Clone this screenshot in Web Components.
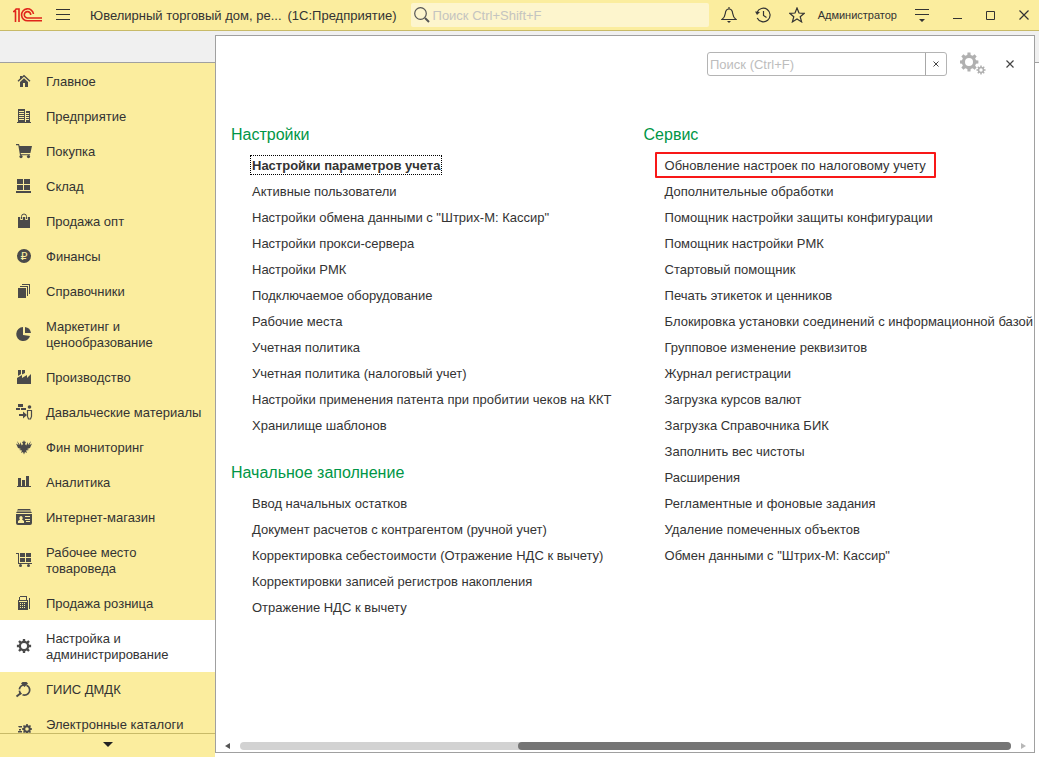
<!DOCTYPE html>
<html lang="ru">
<head>
<meta charset="utf-8">
<title>Ювелирный торговый дом (1С:Предприятие)</title>
<style>
  html, body { margin: 0; height: 100%; }
  body {
    font: 13px/16px "Liberation Sans", Arial, sans-serif;
    color: #333;
    --yellow: #fbed9e;
    --yellow-line: #c8ba68;
    --frame: #a0a0a0;
    --icon: #4a4a4a;
  }
</style>
</head>
<body>
<app-window>
  <title-bar slot="title" name="Ювелирный торговый дом, ре..." product="(1С:Предприятие)" user="Администратор"></title-bar>
  <section-nav slot="nav">
    <nav-item icon="home">Главное</nav-item>
    <nav-item icon="company">Предприятие</nav-item>
    <nav-item icon="cart">Покупка</nav-item>
    <nav-item icon="stock">Склад</nav-item>
    <nav-item icon="bag">Продажа опт</nav-item>
    <nav-item icon="money">Финансы</nav-item>
    <nav-item icon="books">Справочники</nav-item>
    <nav-item icon="pie">Маркетинг и ценообразование</nav-item>
    <nav-item icon="factory">Производство</nav-item>
    <nav-item icon="materials">Давальческие материалы</nav-item>
    <nav-item icon="eagle">Фин мониторинг</nav-item>
    <nav-item icon="chart">Аналитика</nav-item>
    <nav-item icon="card">Интернет-магазин</nav-item>
    <nav-item icon="trolley">Рабочее место товароведа</nav-item>
    <nav-item icon="till">Продажа розница</nav-item>
    <nav-item icon="gear" selected>Настройка и администрирование</nav-item>
    <nav-item icon="ring">ГИИС ДМДК</nav-item>
    <nav-item icon="catalog" tall>Электронные каталоги</nav-item>
  </section-nav>
  <function-panel>
    <div slot="left">
      <link-group heading="Настройки">
        <menu-link focused>Настройки параметров учета</menu-link>
        <menu-link>Активные пользователи</menu-link>
        <menu-link>Настройки обмена данными с "Штрих-М: Кассир"</menu-link>
        <menu-link>Настройки прокси-сервера</menu-link>
        <menu-link>Настройки РМК</menu-link>
        <menu-link>Подключаемое оборудование</menu-link>
        <menu-link>Рабочие места</menu-link>
        <menu-link>Учетная политика</menu-link>
        <menu-link>Учетная политика (налоговый учет)</menu-link>
        <menu-link>Настройки применения патента при пробитии чеков на ККТ</menu-link>
        <menu-link>Хранилище шаблонов</menu-link>
      </link-group>
      <link-group heading="Начальное заполнение">
        <menu-link>Ввод начальных остатков</menu-link>
        <menu-link>Документ расчетов с контрагентом (ручной учет)</menu-link>
        <menu-link>Корректировка себестоимости (Отражение НДС к вычету)</menu-link>
        <menu-link>Корректировки записей регистров накопления</menu-link>
        <menu-link>Отражение НДС к вычету</menu-link>
      </link-group>
    </div>
    <div slot="right">
      <link-group heading="Сервис">
        <menu-link marked>Обновление настроек по налоговому учету</menu-link>
        <menu-link>Дополнительные обработки</menu-link>
        <menu-link>Помощник настройки защиты конфигурации</menu-link>
        <menu-link>Помощник настройки РМК</menu-link>
        <menu-link>Стартовый помощник</menu-link>
        <menu-link>Печать этикеток и ценников</menu-link>
        <menu-link>Блокировка установки соединений с информационной базой</menu-link>
        <menu-link>Групповое изменение реквизитов</menu-link>
        <menu-link>Журнал регистрации</menu-link>
        <menu-link>Загрузка курсов валют</menu-link>
        <menu-link>Загрузка Справочника БИК</menu-link>
        <menu-link>Заполнить вес чистоты</menu-link>
        <menu-link>Расширения</menu-link>
        <menu-link>Регламентные и фоновые задания</menu-link>
        <menu-link>Удаление помеченных объектов</menu-link>
        <menu-link>Обмен данными с "Штрих-М: Кассир"</menu-link>
      </link-group>
    </div>
  </function-panel>
</app-window>

<script>
const gearPath = (cx, cy, outer, inner, hole, teeth) => {
  let d = '';
  const step = Math.PI * 2 / teeth;
  for (let i = 0; i < teeth; i++) {
    const a = i * step - Math.PI / 2;
    [[-0.30, inner], [-0.20, outer], [0.20, outer], [0.30, inner]].forEach(([k, r], j) => {
      d += (i || j ? 'L' : 'M') + (cx + r * Math.cos(a + k * step)).toFixed(2) + ' ' + (cy + r * Math.sin(a + k * step)).toFixed(2);
    });
  }
  return d + `ZM${cx - hole} ${cy}a${hole} ${hole} 0 1 0 ${hole * 2} 0a${hole} ${hole} 0 1 0 ${-hole * 2} 0Z`;
};

const ICONS = {
  home: '<path d="M8 5.2 12 9v5H9v-4H7v4H4V9Z"/><path d="M2 8.2 8 2.8l6 5.4" fill="none" stroke="currentColor" stroke-width="1.4"/><path d="M4 3h2v2L4 6.600Z"/>',
  company: '<path fill-rule="evenodd" d="M2 1h7v13H2ZM3 3v1h5V3ZM3 5v1h5V5ZM3 7v1h5V7ZM3 9v1h5V9ZM3 11v1h5v-1Z" shape-rendering="crispEdges"/><path fill-rule="evenodd" d="M10 3h4v11h-4ZM10 5v1h3V5ZM10 7v1h3V7ZM10 9v1h3V9ZM10 11v1h3v-1Z" shape-rendering="crispEdges"/><path d="M1 14h14v1H1Z"/>',
  cart: '<path d="M0 1h3l.6 2H16l-1.600 7H4.600L5 11.200h9v1H4L2.300 2.200H0Z"/><circle cx="5" cy="13.600" r="1.600"/><circle cx="12.500" cy="13.600" r="1.600"/>',
  stock: '<path shape-rendering="crispEdges" d="M1 1h6v5H1ZM8 1h6v5H8ZM1 7h6v5H1ZM8 7h6v5H8ZM0 13h15v2H0Z"/>',
  bag: '<path d="M2 4h12v11H2Z"/><path d="M5.500 7V3.500a2.500 2.500 0 0 1 5 0V7" fill="none" stroke="#fbed9e" stroke-width="2.600"/><path d="M5.500 6V3.500a2.500 2.500 0 0 1 5 0V6" fill="none" stroke="currentColor"/>',
  money: '<circle cx="8" cy="8" r="7"/><text x="8" y="12" text-anchor="middle" font-family="DejaVu Sans, sans-serif" font-size="11" fill="#fbed9e">₽</text>',
  books: '<path shape-rendering="crispEdges" d="M2 5h8v10H2ZM4 3h8v10h-1V4H4ZM6 1h8v10h-1V2H6Z"/>',
  pie: '<path d="M7 1.100V9l7 .9A7 7 0 1 1 7 1.100Z"/><path d="M9 1a7 7 0 0 1 6 6H9Z"/>',
  factory: '<path d="M1 15V9l5-3v3l5-3v3l4-4v10Z"/><path d="M2 1h3v4L2 7ZM6 1h3v3L6 5.500Z"/>',
  materials: '<path shape-rendering="crispEdges" d="M2 0h5v3H2ZM0 4h4v2H0ZM5 4h5v2H5Z"/><path d="M3 10h4V7.500l4 3.500-4 3.500V12H3Z"/><circle cx="13.500" cy="3" r="1.800"/><path d="M11.500 6.500h4v6l-1 2.500h-2l-1-2.500Z" fill="none" stroke="currentColor" stroke-width="1.200"/>',
  eagle: '<path d="m1 2 1.500 4L0 4.500 2 9l3 1-2 1 3 .5L5 14l2-1 1 2.500L9 13l2 1-1-2.500 3-.5-2-1 3-1 2-4.500L13.500 6 15 2l-3 4-.2-3-1.600 3.500L9 5l1-2-1.500-.5L8 1l-.500 1.500L6 3l1 2-1.200 1.500L4.200 3 4 6Z"/>',
  chart: '<path shape-rendering="crispEdges" d="M2 4h3v8H2ZM6 6h3v6H6ZM10 2h3v10h-3ZM1 12h14v1H1Z"/>',
  card: '<path d="M2 0h12l1 1.500H1ZM1 2.500h14L16 4H0Z"/><path fill-rule="evenodd" d="M0 5h16v9q0 2-2 2H2q-2 0-2-2ZM5 7a2 2 0 0 0-1 3.500L2 12v2h6v-2l-2-1.500A2 2 0 0 0 5 7ZM9 7v1h5V7ZM9 10v1h5v-1ZM10 12v1h4v-1Z"/>',
  trolley: '<path shape-rendering="crispEdges" d="M0 1h3v10h13v1H2V2H0ZM4 1h5v4H4ZM10 1h5v4h-5ZM4 6h5v4H4ZM10 6h5v4h-5Z"/><circle cx="4.500" cy="13.500" r="1.500"/><circle cx="12.500" cy="13.500" r="1.500"/>',
  till: '<path shape-rendering="crispEdges" fill-rule="evenodd" d="M4 1h6l1 1v3h1v10H2V5h1V2ZM4 2v3h6V2ZM3 6v1h8V6ZM4 8v1h1V8ZM6 8v1h1V8ZM8 8v1h1V8ZM4 10v1h1v-1ZM6 10v1h1v-1ZM8 10v1h1v-1ZM4 12v1h1v-1ZM6 12v1h1v-1ZM8 12v1h1v-1ZM13 3h1v11h-1Z"/>',
  gear: `<path fill-rule="evenodd" d="${gearPath(8, 8, 7.200, 5.300, 3, 8)}"/>`,
  ring: '<circle cx="8.500" cy="9" r="5.200" fill="none" stroke="currentColor" stroke-width="1.700" stroke-dasharray="10 1.300 4 1.300 8 1.300"/><path d="M5 2.500 6.500 1h4L12 2.500 8.500 6Z"/><path d="m5 12-4.500 3.500" stroke="currentColor" stroke-width="2"/>',
  catalog: `<path fill-rule="evenodd" d="${gearPath(11, 5, 5, 3.800, 1.800, 8)}"/><path d="M2 2h4v1.500H3ZM3 5h2v1.500H3ZM2 7h4v1.500H2Z"/>`,
};

function define(name, template, setup) {
  const tpl = document.createElement('template');
  tpl.innerHTML = template;
  customElements.define(name, class extends HTMLElement {
    constructor() {
      super();
      this.attachShadow({ mode: 'open' }).append(tpl.content.cloneNode(true));
    }
    connectedCallback() { if (setup) setup(this, this.shadowRoot); }
  });
}

define('app-window', `
  <style>
    :host { display: flex; flex-direction: column; height: 100vh; overflow: hidden; }
    .work {
      flex: 1; min-height: 0; display: grid; grid-template-columns: 215px minmax(0, 1fr); grid-template-rows: minmax(0, 1fr);
      background: linear-gradient(#f0f0f0 0 31px, var(--frame) 31px 32px, #fff 32px);
    }
  </style>
  <slot name="title"></slot>
  <div class="work"><slot name="nav"></slot><slot></slot></div>`);

define('title-bar', `
  <style>
    :host { display: block; background: var(--yellow); border-bottom: 1px solid var(--yellow-line); }
    header { display: flex; align-items: center; height: 30px; padding: 0 10px 0 13px; }
    svg { display: block; }
    button { display: block; border: 0; padding: 0; background: none; color: #333; }
    .menu { margin: 0 20px 0 13px; }
    h1 { display: flex; gap: 6px; margin: 0 14px 0 0; font-size: 13px; line-height: 14px; padding-top: 2px; font-weight: 400; white-space: nowrap; }
    .search { flex: 1; display: flex; align-items: center; gap: 3px; height: 24px; padding-left: 3px; border-radius: 2px; background: #fdf5cd; }
    input { flex: 1; min-width: 0; border: 0; padding: 2px 0 0; background: none; font: inherit; outline: 0; }
    input::placeholder { color: #c4c4c0; opacity: 1; }
    .tools { display: flex; align-items: center; gap: 18px; margin: 0 13px 0 12px; }
    .user { font-size: 11px; }
    .win { display: flex; align-items: center; gap: 24px; margin-left: 18px; }
  </style>
  <header>
    <svg width="30" height="16" viewBox="0 0 30 16" fill="none" stroke="#e0251b" stroke-width="1.600" role="img" aria-label="1С">
      <path d="M0 4.500h2.500V15M2.500 2H6V15M1 4.500 3.500 1.800"/>
      <path d="M20.500 7A6 6 0 1 0 14.800 13.800H29"/><path d="M17.700 8A3.200 3.200 0 1 0 14.800 11H29"/>
    </svg>
    <button class="menu" aria-label="Меню"><svg width="14" height="12" viewBox="0 0 14 12" shape-rendering="crispEdges"><path d="M0 0h14v1H0ZM0 5h14v1H0ZM0 10h14v1H0Z" fill="#333"/></svg></button>
    <h1><span class="name"></span><span class="product"></span></h1>
    <label class="search">
      <svg width="16" height="16" viewBox="0 0 16 16" fill="none" stroke="#555"><circle cx="6.500" cy="6.500" r="5.800" stroke-width="1.200"/><path d="m11 11 4 4" stroke-width="2"/></svg>
      <input type="text" placeholder="Поиск Ctrl+Shift+F" aria-label="Поиск">
    </label>
    <div class="tools">
      <button aria-label="Уведомления"><svg width="16" height="16" viewBox="0 0 16 16" fill="none" stroke="#333" stroke-width="1.200"><path d="M8 0v2M1 12.500h14c-2.500-2-3-3.500-3.300-6C11.400 3.500 10 2 8 2S4.600 3.500 4.300 6.500C4 9 3.500 10.500 1 12.500Z"/><path d="M6 14h4l-2 2Z" fill="#333" stroke="none"/></svg></button>
      <button aria-label="История"><svg width="16" height="16" viewBox="0 0 16 16" fill="none" stroke="#333" stroke-width="1.200"><path d="M2 5.500A6.800 6.800 0 1 1 2.200 11M8.500 4v4.500l3 2"/><path d="M0 4.500 5 5 2 8Z" fill="#333" stroke="none"/></svg></button>
      <button aria-label="Избранное"><svg width="16" height="16" viewBox="0 0 16 16" fill="none" stroke="#333" stroke-width="1.200"><path d="m8 1 2 5 5.300.3-4.100 3.400 1.400 5.200L8 12l-4.600 2.900 1.400-5.200L.7 6.300 6 6Z"/></svg></button>
    </div>
    <span class="user"></span>
    <div class="win">
      <button aria-label="Настройка панели"><svg width="14" height="14" viewBox="0 0 14 14" fill="#333"><path d="M0 1h14v1H0ZM0 6h14v1H0ZM4 11h6l-3 3Z"/></svg></button>
      <button aria-label="Свернуть"><svg width="9" height="10" viewBox="0 0 9 10" fill="#333"><path d="M0 8h9v1H0Z"/></svg></button>
      <button aria-label="Развернуть"><svg width="9" height="9" viewBox="0 0 9 9" fill="none" stroke="#333"><path d="M.5.5h8v8h-8Z"/></svg></button>
      <button aria-label="Закрыть"><svg width="10" height="10" viewBox="0 0 10 10" fill="none" stroke="#333" stroke-width="1.200"><path d="m.5.5 9 9m0-9-9 9"/></svg></button>
    </div>
  </header>`, (host, root) => {
    for (const key of ['name', 'product', 'user']) root.querySelector('.' + key).textContent = host.getAttribute(key);
  });

define('section-nav', `
  <style>
    :host { display: flex; flex-direction: column; margin-top: 31px; border-top: 1px solid var(--frame); background: var(--yellow); min-height: 0; }
    nav { flex: 1; min-height: 0; overflow: hidden; padding-top: 1px; }
    button { display: flex; align-items: center; justify-content: center; height: 24px; padding: 0 0 3px; border: 0; border-top: 1px solid var(--yellow-line); background: none; }
  </style>
  <nav><slot></slot></nav>
  <button aria-label="Прокрутить вниз"><svg width="10" height="5" viewBox="0 0 10 5"><path d="M0 0h10L5 5Z" fill="#222"/></svg></button>`);

define('nav-item', `
  <style>
    :host { display: block; }
    :host([selected]) { background: #fff; box-shadow: 0 -1px #fff; }
    a { display: flex; align-items: center; gap: 14px; padding: 10px 8px 9px 16px; color: inherit; text-decoration: none; }
    :host([tall]) a { min-height: 32px; }
    :host([tall]) span { align-self: flex-start; }
    svg { flex: none; margin: -1px 0 1px; color: var(--icon); }
  </style>
  <a href="#"><svg width="16" height="16" viewBox="0 0 16 16" fill="currentColor" overflow="visible" aria-hidden="true"></svg><span><slot></slot></span></a>`,
  (host, root) => { root.querySelector('svg').innerHTML = ICONS[host.getAttribute('icon')]; });

define('function-panel', `
  <style>
    :host { display: flex; flex-direction: column; margin: 4px 4px 4px 0; border: 1px solid var(--frame); background: #fff; min-width: 0; min-height: 0; overflow: hidden; }
    .bar { display: flex; align-items: center; justify-content: flex-end; padding: 16px 20px 0; height: 24px; }
    .columns { flex: 1; min-height: 0; overflow: hidden; display: grid; grid-template-columns: max-content max-content; gap: 32px; padding: 49px 0 0 15px; }
    button { display: block; border: 0; padding: 0; background: none; }
    svg { display: block; }
    .gears { margin: 0 20px 0 13px; }
  </style>
  <div class="bar">
    <search-box></search-box>
    <button class="gears" aria-label="Настройка"><svg width="26" height="24" viewBox="0 0 26 24" fill="#b0b0b0"><path fill-rule="evenodd" d="${gearPath(9, 10, 9.500, 7.200, 4, 8)}"/><path fill-rule="evenodd" d="${gearPath(21, 18, 4.600, 3.300, 1.700, 8)}"/></svg></button>
    <button aria-label="Закрыть"><svg width="8" height="8" viewBox="0 0 8 8" stroke="#444" stroke-width="1.200"><path d="m.5.5 7 7m0-7-7 7"/></svg></button>
  </div>
  <div class="columns"><slot name="left"></slot><slot name="right"></slot></div>
  <scroll-strip></scroll-strip>`);

define('search-box', `
  <style>
    :host { display: flex; box-sizing: border-box; width: 240px; height: 24px; border: 1px solid #b4b4b4; border-radius: 3px; }
    input { flex: 1; min-width: 0; border: 0; padding: 2px 2px 0; background: none; font: inherit; outline: 0; }
    input::placeholder { color: #bdbdbd; opacity: 1; }
    button { display: flex; align-items: center; justify-content: center; width: 21px; padding: 0; border: 0; border-left: 1px solid #a8a8a8; background: none; }
  </style>
  <input type="text" placeholder="Поиск (Ctrl+F)" aria-label="Поиск">
  <button aria-label="Очистить"><svg width="6" height="6" viewBox="0 0 6 6" stroke="#444"><path d="m.5.5 5 5m0-5-5 5"/></svg></button>`);

define('link-group', `
  <style>
    :host { display: block; margin-bottom: 25px; }
    h2 { margin: 0 0 7px; font-size: 16px; line-height: 20px; font-weight: 400; color: #009646; }
    div { padding-left: 21px; }
  </style>
  <h2></h2><div><slot></slot></div>`,
  (host, root) => { root.querySelector('h2').textContent = host.getAttribute('heading'); });

define('menu-link', `
  <style>
    :host { display: flex; align-items: center; height: 26px; white-space: nowrap; }
    a { padding-top: 2px; line-height: 14px; color: inherit; text-decoration: none; }
    :host([focused]) a { font-weight: 700; outline: 1px dotted #000; outline-offset: 1px; }
    :host([marked]) a { border: 2px solid #f81818; border-radius: 1px; padding: 5px 8px 3px; margin: 0 -10px; }
  </style>
  <a href="#"><slot></slot></a>`);

define('scroll-strip', `
  <style>
    :host { display: flex; align-items: center; gap: 10px; height: 12px; padding: 0 8px 0 9px; }
    .track { flex: 1; display: flex; justify-content: flex-end; border-radius: 4px; background: #d2d2d2; }
    .thumb { width: 64%; height: 8px; border-radius: 4px; background: #757575; }
  </style>
  <svg width="5" height="6" viewBox="0 0 5 6"><path d="M5 0v6L0 3Z" fill="#555"/></svg>
  <div class="track"><div class="thumb"></div></div>
  <svg width="5" height="6" viewBox="0 0 5 6"><path d="M0 0v6l5-3Z" fill="#b8b8b8"/></svg>`);
</script>
</body>
</html>
